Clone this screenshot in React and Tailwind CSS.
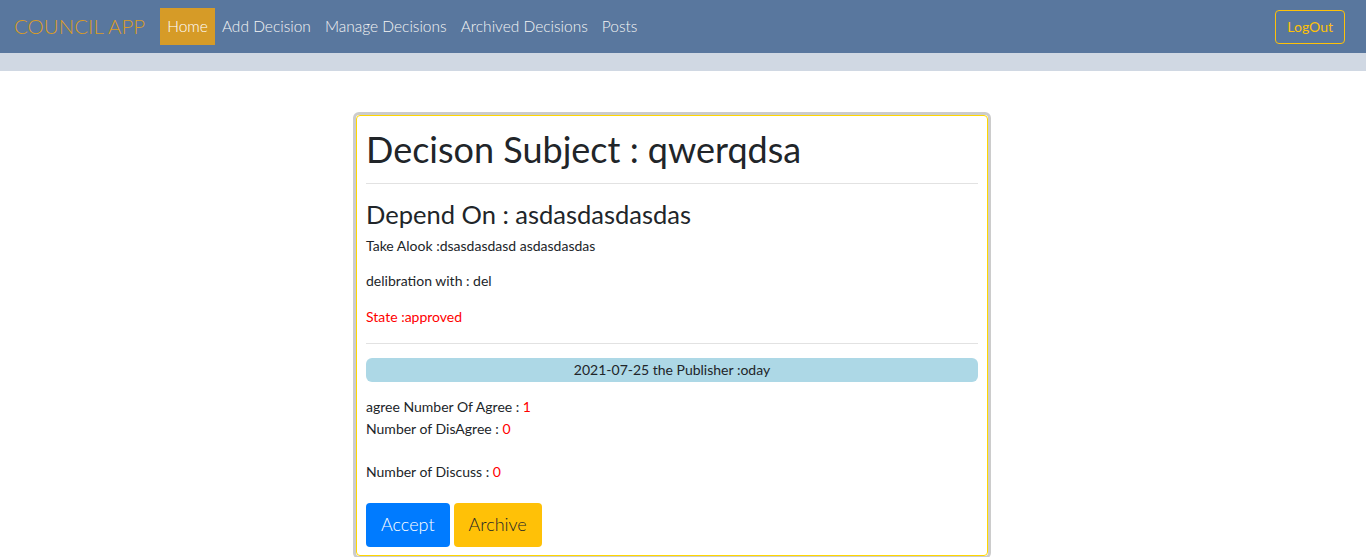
import React from "react";

const navLinks = ["Add Decision", "Manage Decisions", "Archived Decisions", "Posts"];

const App = () => {
    return (
        <div className="min-h-screen bg-white font-['Lato','Noto_Sans',sans-serif] text-[#212529]">
            {/* Navbar */}
            <nav className="h-[53px] bg-[#59779e] flex items-center px-[14px]">
                <span className="text-[20.5px] font-light text-[#d99c26] mr-[15px]">COUNCIL APP</span>
                <a className="h-[37px] px-[7px] flex items-center bg-[#d69b27] text-[15.5px] text-white font-light">Home</a>
                {navLinks.map((link) => (
                    <a key={link} className="px-[7px] text-[15.5px] text-[#f4f4f4] font-light">
                        {link}
                    </a>
                ))}
                <button className="ml-auto mr-[7px] h-[34px] px-[11px] border border-[#ffc107] rounded text-[#ffc107] text-[14px]">
                    LogOut
                </button>
            </nav>
            <div className="h-[18px] bg-[#d0d8e3]"></div>

            {/* Decision card */}
            <div className="flex justify-center pt-[41px] pr-[22px]">
                <div className="w-[638px] border-[3px] border-[#cccccc] rounded-md">
                    <div className="border border-[#ffd700] rounded px-[9px] pb-[8px]">
                        <h1 className="text-[36px] leading-[1.2] pt-[12px] pb-[12px]">Decison Subject : qwerqdsa</h1>
                        <hr className="border-[#e2e2e2]" />
                        <h3 className="text-[25.5px] leading-[1.2] mt-[15px]">Depend On : asdasdasdasdas</h3>
                        <p className="text-[14px] leading-[21px] mt-[5px]">Take Alook :dsasdasdasd asdasdasdas</p>
                        <p className="text-[14px] leading-[21px] mt-[14px]">delibration with : del</p>
                        <p className="text-[14px] leading-[21px] mt-[15px] text-[#ff0000]">State :approved</p>
                        <hr className="border-[#e2e2e2] mt-[16px]" />
                        <div className="mt-[14px] h-[24px] rounded-md bg-[#add8e6] flex items-center justify-center text-[14px]">
                            2021-07-25 the Publisher :oday
                        </div>
                        <p className="text-[14px] mt-[14px] leading-[22px]">
                            agree Number Of Agree : <span className="text-[#ff0000]">1</span>
                        </p>
                        <p className="text-[14px] leading-[22px]">
                            Number of DisAgree : <span className="text-[#ff0000]">0</span>
                        </p>
                        <p className="text-[14px] mt-[21px] leading-[22px]">
                            Number of Discuss : <span className="text-[#ff0000]">0</span>
                        </p>
                        <div className="flex gap-[4px] mt-[20px]">
                            <button className="h-[44px] px-[15px] rounded bg-[#007bff] text-white text-[18px] font-light">Accept</button>
                            <button className="h-[44px] px-[15px] rounded bg-[#ffc107] text-[#212529] text-[18px] font-light">Archive</button>
                        </div>
                    </div>
                </div>
            </div>
        </div>
    );
};

export default App;
